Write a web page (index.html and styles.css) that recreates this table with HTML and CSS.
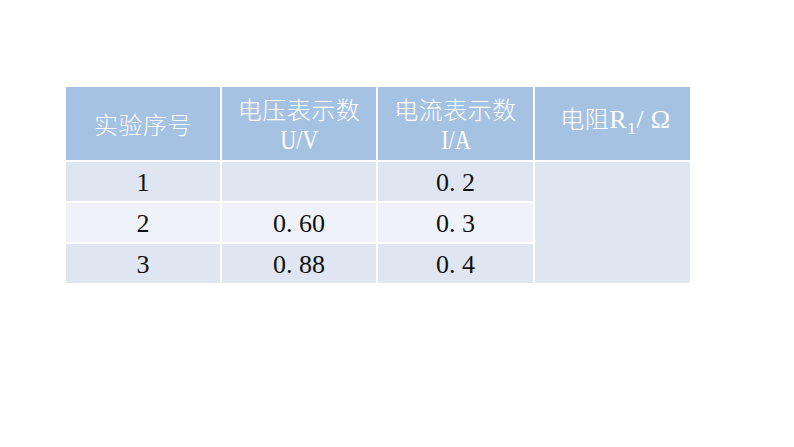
FILE: index.html
```html
<!DOCTYPE html>
<html lang="zh">
<head>
<meta charset="utf-8">
<link rel="stylesheet" href="styles.css">
</head>
<body>
<div class="table">
  <div class="cell head"><span class="cjk">实验序号</span></div>
  <div class="cell head"><span class="cjk">电压表示数</span><span class="unit">U/V</span></div>
  <div class="cell head"><span class="cjk">电流表示数</span><span class="unit">I/A</span></div>
  <div class="cell head"><span class="cjk r">电阻<span class="serif">R<sub>1</sub>/ Ω</span></span></div>

  <div class="cell odd">1</div>
  <div class="cell odd"></div>
  <div class="cell odd">0. 2</div>
  <div class="cell odd merged"></div>

  <div class="cell even">2</div>
  <div class="cell even">0. 60</div>
  <div class="cell even">0. 3</div>

  <div class="cell odd">3</div>
  <div class="cell odd">0. 88</div>
  <div class="cell odd">0. 4</div>
</div>
</body>
</html>
```
FILE: styles.css
```css
html, body {
  margin: 0;
  padding: 0;
  background: #ffffff;
}
body {
  width: 794px;
  height: 447px;
  overflow: hidden;
}
.table {
  margin: 87px 0 0 66px;
  display: grid;
  grid-template-columns: 154px 154px 155px 155px;
  grid-template-rows: 73px 39px 39px 39px;
  gap: 2px;
  width: 624px;
}
.cell {
  display: flex;
  flex-direction: column;
  align-items: center;
  justify-content: center;
  font-family: "Liberation Serif", "Noto Sans CJK SC", serif;
  font-size: 26px;
  color: #111111;
  padding-top: 2px;
  box-sizing: border-box;
}
.head {
  background: #a5c2e3;
  color: #ffffff;
  padding-top: 0;
}
.cjk {
  font-family: "Noto Sans CJK SC", sans-serif;
  font-size: 24px;
  line-height: 32px;
  letter-spacing: 0.5px;
  font-weight: 300;
}
.unit {
  font-family: "Liberation Serif", serif;
  font-size: 27px;
  line-height: 30px;
  transform: scaleX(0.82);
}
.r {
  margin-left: 6px;
}
.serif {
  font-family: "Liberation Serif", serif;
  font-size: 26px;
}
.serif sub {
  font-size: 17px;
  vertical-align: -6px;
}
.odd {
  background: #dfe6f2;
}
.even {
  background: #eff3f9;
}
.merged {
  grid-column: 4;
  grid-row: 2 / span 3;
}
```
